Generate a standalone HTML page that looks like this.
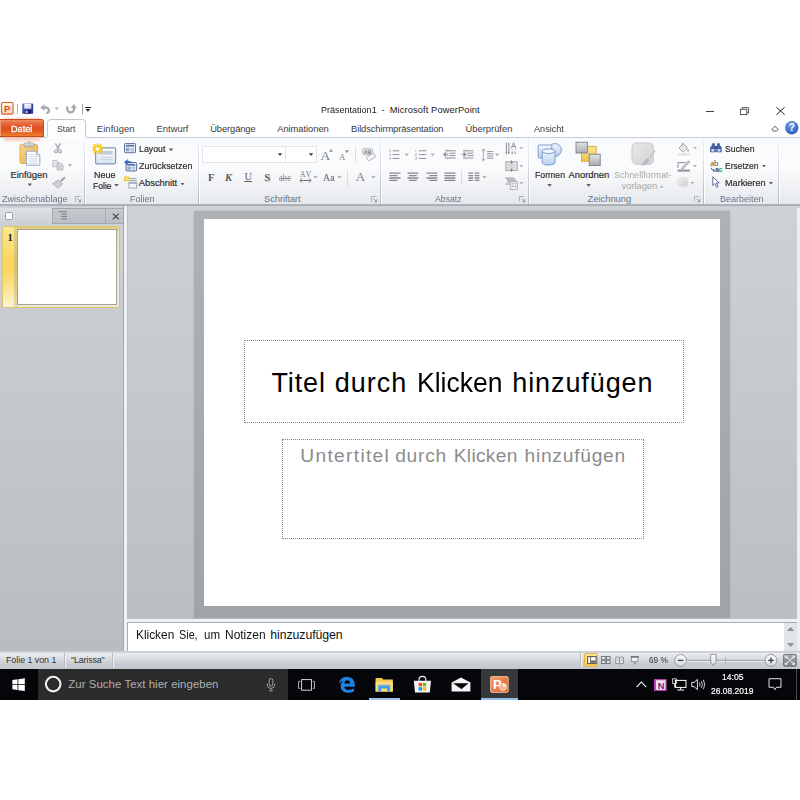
<!DOCTYPE html>
<html lang="de"><head><meta charset="utf-8"><title>Präsentation1 - Microsoft PowerPoint</title>
<style>
*{box-sizing:border-box;margin:0;padding:0}
html,body{width:800px;height:800px;background:#fff;overflow:hidden}
body{font-family:"Liberation Sans",sans-serif;font-size:9px;color:#222;position:relative}
.a{position:absolute}
.t{position:absolute;white-space:nowrap;line-height:1;font-family:"Liberation Sans",sans-serif}
svg{position:absolute;overflow:visible}
#title{left:0;top:100px;width:800px;height:20px;background:#fff}
#tabs{left:0;top:119px;width:800px;height:19px;background:#fff}
#ribbon{left:0;top:137px;width:800px;height:67px;background:linear-gradient(#f9fafb 0%,#fafbfc 45%,#f0f2f5 74%,#e4e7ec 100%);border-top:1px solid #c7cdd6}
#ribline{left:0;top:204px;width:800px;height:2px;background:linear-gradient(#b4b8be,#a7abb1)}
#work{left:0;top:206px;width:800px;height:445px;background:linear-gradient(#ced2d7,#b9bdc2)}
.gsep{position:absolute;top:139px;width:2px;height:65px;background:linear-gradient(#eef0f3 0%,#dde1e6 35%,#c3c8cf 75%,#b1b6be 100%);border-right:1px solid #fff}
.dd{position:absolute;width:4.6px;height:2.8px;background:#5c5e62;clip-path:polygon(0 0,100% 0,50% 100%);margin-left:-0.3px}
.ddg{background:#b0b3b8}
.lau{position:absolute;width:6px;height:6px}
#status{left:0;top:651px;width:800px;height:18px;background:linear-gradient(#ccd0d4 0,#cfd2d6 1.5px,#e8ebef 2.5px,#e4e7eb 4px,#d8dbdf 8px,#cbced3 12px,#c4c7cc 18px)}
#taskbar{left:0;top:669px;width:800px;height:31px;background:#050609}
</style></head><body>
<div id="title" class="a"></div>
<!-- app icon -->
<svg style="left:0.5px;top:102px" width="13" height="13" viewBox="0 0 14 14">
 <defs><linearGradient id="gpp" x1="0" y1="0" x2="0" y2="1"><stop offset="0" stop-color="#fff6ee"/><stop offset="1" stop-color="#f7cdb0"/></linearGradient></defs>
 <rect x="0.5" y="0.5" width="12.5" height="12.5" rx="1.5" fill="url(#gpp)" stroke="#d9622b" stroke-width="1.2"/>
 <text x="3.2" y="10.8" font-family="Liberation Sans,sans-serif" font-weight="bold" font-size="10.5" fill="#d9501a">P</text>
</svg>
<div class="a" style="left:16.5px;top:103.5px;width:1px;height:10.5px;background:#b0b0b0"></div>
<!-- save -->
<svg style="left:22.3px;top:103px" width="11.6" height="11.2" viewBox="0 0 13 12">
 <defs><linearGradient id="gsv" x1="0" y1="0" x2="1" y2="1"><stop offset="0" stop-color="#6a78d8"/><stop offset="0.5" stop-color="#3a45b4"/><stop offset="1" stop-color="#262c8a"/></linearGradient>
 <linearGradient id="gsw" x1="0" y1="0" x2="1" y2="1"><stop offset="0" stop-color="#ffffff"/><stop offset="1" stop-color="#c9d2ee"/></linearGradient></defs>
 <rect x="0.3" y="0.3" width="12.2" height="11.4" rx="0.8" fill="url(#gsv)"/>
 <rect x="2.6" y="0.6" width="7.8" height="5.6" fill="url(#gsw)"/>
 <rect x="3" y="7.6" width="7" height="4" fill="#1a1f66"/>
 <rect x="4" y="8.4" width="2.2" height="2.6" fill="#c9d0ec"/>
</svg>
<!-- undo -->
<svg style="left:40px;top:103.5px" width="11" height="10" viewBox="0 0 11 10">
 <path d="M3 3.6 H6 A3 3 0 0 1 9 6.6 Q9 8.6 6.4 9.2" fill="none" stroke="#a6aab0" stroke-width="2.3"/>
 <path d="M0.3 3.6 L4.6 0.2 V7 Z" fill="#a6aab0"/>
</svg>
<div class="dd ddg" style="left:54.8px;top:107.2px"></div>
<!-- redo -->
<svg style="left:65px;top:103.5px" width="12" height="10" viewBox="0 0 12 10">
 <path d="M2.2 2.4 V5 A3.4 3.4 0 0 0 9 5 V3.4" fill="none" stroke="#a6aab0" stroke-width="2.3"/>
 <path d="M5.6 3.8 L9.4 0 L11.6 4.6 Z" fill="#a6aab0"/>
</svg>
<div class="a" style="left:81.5px;top:104px;width:1px;height:10px;background:#9a9a9a"></div>
<!-- qat customize -->
<div class="a" style="left:85.4px;top:106.6px;width:5.2px;height:1px;background:#222"></div>
<div class="dd" style="left:85.6px;top:108.8px;width:5.2px;height:3px;background:#222"></div>
<!-- window controls -->
<div class="a" style="left:705.5px;top:110.7px;width:8.5px;height:0.8px;background:#444"></div>
<svg style="left:739.8px;top:106.6px" width="9.4" height="8.4" viewBox="0 0 10 9">
 <path d="M2.5 2.3 V0.6 H9.2 V6.4 H7.4" fill="none" stroke="#333" stroke-width="0.85"/>
 <rect x="0.6" y="2.4" width="6.7" height="5.8" fill="none" stroke="#333" stroke-width="0.85"/>
</svg>
<svg style="left:776px;top:106.8px" width="9" height="8" viewBox="0 0 9 8">
 <path d="M0.4 0.3 L8.6 7.7 M8.6 0.3 L0.4 7.7" stroke="#222" stroke-width="1" fill="none"/>
</svg>
<div id="tabs" class="a"></div>
<div id="ribbon" class="a"></div>
<!-- Datei glow + tab -->
<div class="a" style="left:4px;top:117.5px;width:36px;height:23px;background:#f8c4b4;filter:blur(1.3px);opacity:.8"></div>
<div class="a" style="left:0;top:119px;width:44px;height:18.4px;border-radius:0 3px 0 0;background:linear-gradient(#f08d5e 0%,#e86c3e 20%,#df4f24 48%,#e2581f 72%,#ef7e2c 100%);border:1px solid #c9481c;border-left:none;box-shadow:inset 1px 0 0 #f29a72"></div>
<!-- Start tab -->
<svg style="left:44px;top:119px" width="45" height="20" viewBox="0 0 45 20">
 <path d="M0.4 18.9 Q3.4 18.9 3.4 16 V3.6 Q3.4 0.5 6.6 0.5 H38.4 Q41.6 0.5 41.6 3.6 V16 Q41.6 18.9 44.6 18.9 V20 H0.4 Z" fill="#fdfdfe"/>
 <path d="M0.4 18.9 Q3.4 18.9 3.4 16 V3.6 Q3.4 0.5 6.6 0.5 H38.4 Q41.6 0.5 41.6 3.6 V16 Q41.6 18.9 44.6 18.9" fill="none" stroke="#b7bec9" stroke-width="0.9"/>
</svg>
<!-- minimize ribbon -->
<svg style="left:771px;top:125px" width="8" height="7" viewBox="0 0 8 7">
 <path d="M0.8 4.6 L4 1.2 L7.2 4.6 L5.6 6 H2.4 Z" fill="#fff" stroke="#444" stroke-width="0.9" stroke-linejoin="round"/>
</svg>
<!-- help -->
<svg style="left:784.6px;top:121.2px" width="13.6" height="13.6" viewBox="0 0 14 14">
 <defs><radialGradient id="ghelp" cx="0.4" cy="0.3" r="0.8"><stop offset="0" stop-color="#6fa3e8"/><stop offset="1" stop-color="#1c56b8"/></radialGradient></defs>
 <circle cx="7" cy="7" r="6.6" fill="url(#ghelp)" stroke="#2a5db5" stroke-width="0.5"/>
 <text x="7" y="10.6" text-anchor="middle" font-family="Liberation Sans,sans-serif" font-weight="bold" font-size="10.5" fill="#fff">?</text>
</svg>
<div id="ribline" class="a"></div>
<div class="gsep" style="left:84px"></div>
<div class="gsep" style="left:198px"></div>
<div class="gsep" style="left:380px"></div>
<div class="gsep" style="left:528px"></div>
<div class="gsep" style="left:703px"></div>
<div class="gsep" style="left:778px"></div>
<!-- launcher symbol -->
<svg width="0" height="0" style="left:0;top:0"><defs>
 <g id="lau"><path d="M0.5 5.5 V0.5 H5.5" fill="none" stroke="#a5abb3" stroke-width="0.9"/><path d="M2.6 2.6 L5.6 5.6 M5.8 3.2 V5.8 H3.2" fill="none" stroke="#8d939b" stroke-width="0.9"/></g>
 <linearGradient id="gclip" x1="0" y1="0" x2="1" y2="1"><stop offset="0" stop-color="#f7d58a"/><stop offset="1" stop-color="#e9b04a"/></linearGradient>
 <linearGradient id="gblue" x1="0" y1="0" x2="0" y2="1"><stop offset="0" stop-color="#f2f7fd"/><stop offset="1" stop-color="#b7cfee"/></linearGradient>
 <linearGradient id="ggray" x1="0" y1="0" x2="0" y2="1"><stop offset="0" stop-color="#e3e4e6"/><stop offset="1" stop-color="#a9abae"/></linearGradient>
 <linearGradient id="gyel" x1="0" y1="0" x2="0" y2="1"><stop offset="0" stop-color="#fbe89a"/><stop offset="1" stop-color="#eec548"/></linearGradient>
</defs></svg>
<svg style="left:75px;top:196px" width="7" height="7"><use href="#lau"/></svg>
<svg style="left:371px;top:196px" width="7" height="7"><use href="#lau"/></svg>
<svg style="left:519px;top:196px" width="7" height="7"><use href="#lau"/></svg>
<svg style="left:694px;top:196px" width="7" height="7"><use href="#lau"/></svg>
<!-- paste -->
<svg style="left:19px;top:141px" width="22" height="25" viewBox="0 0 22 25">
 <rect x="1" y="3.4" width="17.6" height="19" rx="1.4" fill="url(#gclip)" stroke="#dca53f" stroke-width="0.8"/>
 <rect x="5" y="2" width="10" height="3.8" rx="1" fill="#c3c6ca" stroke="#8f9399" stroke-width="0.6"/>
 <path d="M5.8 3 H14.2" stroke="#f2f3f4" stroke-width="0.9"/>
 <circle cx="10" cy="1.8" r="1.3" fill="#e3e5e7" stroke="#8f9399" stroke-width="0.5"/>
 <path d="M7.4 10.2 H17 L20.8 14 V24.2 H7.4 Z" fill="#fdfeff" stroke="#8fa3c0" stroke-width="0.9"/>
 <path d="M17 10.2 V14 H20.8" fill="#dfe8f5" stroke="#8fa3c0" stroke-width="0.7"/>
 <path d="M9.4 13.4 H15 M9.4 15.6 H18.6 M9.4 17.8 H18.6 M9.4 20 H18.6 M9.4 22.2 H18.6" stroke="#c8d2e1" stroke-width="0.9"/>
</svg>
<div class="dd" style="left:27.8px;top:183.4px"></div>
<!-- scissors -->
<svg style="left:54.4px;top:142.8px" width="8" height="11" viewBox="0 0 8 11">
 <path d="M1.4 0.4 L5 6.6 M6.6 0.4 L3 6.6" stroke="#a9acb1" stroke-width="1.5" fill="none"/>
 <circle cx="1.9" cy="8.4" r="1.4" fill="none" stroke="#a3a6ab" stroke-width="1.1"/>
 <circle cx="6.1" cy="8.4" r="1.4" fill="none" stroke="#a3a6ab" stroke-width="1.1"/>
</svg>
<!-- copy -->
<svg style="left:52.2px;top:159.8px" width="12.4" height="10.6" viewBox="0 0 13 12">
 <path d="M0.5 0.5 H4.8 L6.8 2.5 V7.6 H0.5 Z" fill="#e6e7e9" stroke="#a9acb1" stroke-width="0.8"/>
 <path d="M5.4 3.6 H9.8 L12 5.8 V11.2 H5.4 Z" fill="#dcdde0" stroke="#a1a4a9" stroke-width="0.8"/>
 <path d="M6.8 7.2 H10.6 M6.8 9 H10.6" stroke="#b7babf" stroke-width="0.7"/>
</svg>
<div class="dd ddg" style="left:68px;top:164px"></div>
<!-- format painter -->
<svg style="left:52px;top:176.5px" width="14" height="12" viewBox="0 0 14 12">
 <path d="M9.2 3.6 L12.4 0.8" stroke="#a6a9ad" stroke-width="2.2" stroke-linecap="round"/>
 <path d="M6.2 3 L10.6 6.8 L6.4 11.2 Q3 9.4 0.6 6.6 Z" fill="#cfd0d3" stroke="#a6a9ad" stroke-width="0.8"/>
</svg>
<!-- new slide -->
<svg style="left:91px;top:142px" width="26" height="23" viewBox="0 0 26 23">
 <defs><linearGradient id="gns" x1="0" y1="0" x2="0" y2="1"><stop offset="0" stop-color="#ffffff"/><stop offset="1" stop-color="#d9e4f4"/></linearGradient></defs>
 <rect x="4.6" y="5.8" width="20" height="16" rx="1.2" fill="url(#gns)" stroke="#8496b0" stroke-width="1.2"/>
 <rect x="7.6" y="8.8" width="14" height="3.8" fill="#c3cbda"/>
 <path d="M9.6 15.4 H21.6 M9.6 17.6 H21.6 M7.6 15.4 H8.4 M7.6 17.6 H8.4" stroke="#cbd3e1" stroke-width="1"/>
 <path d="M6.6 1.4 L7.6 4.2 L10.2 2.2 L9.4 5 L12 5.4 L9.8 6.8 L12 8.4 L9.4 8.6 L10.2 11.4 L7.6 9.6 L6.6 12 L5.6 9.6 L3 11.4 L3.8 8.6 L1.4 8.4 L3.4 6.8 L1.4 5.4 L3.8 5 L3 2.2 L5.6 4.2 Z" fill="#f6d02a" stroke="#f2c31a" stroke-width="0.8" stroke-linejoin="round"/>
 <circle cx="6.6" cy="6.8" r="1.9" fill="#fffbe0"/>
</svg>
<div class="dd" style="left:114.5px;top:184px"></div>
<!-- layout -->
<svg style="left:124px;top:143px" width="12.6" height="10.8" viewBox="0 0 14 12">
 <rect x="0.6" y="0.6" width="12.2" height="10.2" rx="0.8" fill="#f4f7fc" stroke="#4a6494" stroke-width="1"/>
 <rect x="2" y="2" width="9.4" height="2" fill="#5a75a8"/>
 <rect x="2" y="5.2" width="4" height="4.2" fill="#8ea3c8"/>
 <path d="M7.2 5.8 H11.4 M7.2 7.4 H11.4 M7.2 9 H11.4" stroke="#7d93bc" stroke-width="0.8"/>
</svg>
<div class="dd" style="left:169px;top:148.4px"></div>
<!-- reset -->
<svg style="left:123.8px;top:158.8px" width="13.4" height="12.6" viewBox="0 0 14 13">
 <rect x="2.2" y="3.6" width="11" height="8.8" rx="0.8" fill="#eef2f9" stroke="#4a6494" stroke-width="1"/>
 <rect x="3.6" y="5.2" width="8.2" height="1.8" fill="#5a75a8"/>
 <rect x="3.6" y="8" width="3.4" height="3" fill="#8ea3c8"/>
 <path d="M8 8.6 H11.8 M8 10.4 H11.8" stroke="#7d93bc" stroke-width="0.8"/>
 <path d="M0.4 3.4 L3.6 0.4 V2 Q7 1.6 8.4 4.4 Q6.4 3.4 3.6 4.2 V6 Z" fill="#2f6fd6" stroke="#1e4fa8" stroke-width="0.4"/>
</svg>
<!-- section -->
<svg style="left:123.6px;top:175.8px" width="13.6" height="12.6" viewBox="0 0 14 13">
 <rect x="0.4" y="1" width="4.6" height="3.8" fill="#fbe27a" stroke="#e8b920" stroke-width="0.8"/>
 <path d="M5.6 2.6 H13 M5.6 4.6 H13" stroke="#9aa3b3" stroke-width="1"/>
 <rect x="5" y="6.4" width="8.2" height="6" fill="#f4f6fb" stroke="#8f99ad" stroke-width="0.9"/>
 <rect x="5" y="6.4" width="8.2" height="1.8" fill="#a8b2c6"/>
</svg>
<div class="dd" style="left:180.4px;top:182.6px"></div>
<!-- font combos -->
<div class="a" style="left:202px;top:146px;width:84px;height:17px;background:#fff;border:1px solid #e2e5ea"></div>
<div class="a" style="left:285px;top:146px;width:32px;height:17px;background:#fff;border:1px solid #e2e5ea"></div>
<div class="dd" style="left:278px;top:153.2px;background:#444"></div>
<div class="dd" style="left:309px;top:153.2px;background:#444"></div>
<!-- grow/shrink markers -->
<svg style="left:328.6px;top:148.6px" width="4" height="3" viewBox="0 0 4 3"><path d="M0 2.8 L2 0 L4 2.8 Z" fill="#8a8d91"/></svg>
<svg style="left:344.8px;top:150px" width="4" height="3" viewBox="0 0 4 3"><path d="M0 0.2 L2 3 L4 0.2 Z" fill="#8a8d91"/></svg>
<div class="a" style="left:355px;top:148px;width:1px;height:15px;background:#d9dce1"></div>
<!-- clear formatting -->
<svg style="left:362px;top:148px" width="14" height="13" viewBox="0 0 14 13">
 <rect x="0.5" y="0.5" width="10.2" height="6.4" rx="1.5" fill="#e2e2e5" stroke="#b4b6ba" stroke-width="0.8"/>
 <text x="5.6" y="5.6" text-anchor="middle" font-family="Liberation Sans,sans-serif" font-weight="bold" font-size="5.2" fill="#7d7f84">AB</text>
 <rect x="4.6" y="6.8" width="8.6" height="4.6" rx="1.6" transform="rotate(-30 8.9 9.1)" fill="#f6f6f7" stroke="#a4a6ab" stroke-width="0.8"/>
</svg>
<!-- AV spacing arrow -->
<svg style="left:298.5px;top:178.2px" width="13" height="5" viewBox="0 0 13 5">
 <path d="M1 2.5 H12 M3.2 0.4 L0.8 2.5 L3.2 4.6 M9.8 0.4 L12.2 2.5 L9.8 4.6" fill="none" stroke="#77797d" stroke-width="1"/>
</svg>
<div class="dd ddg" style="left:313.4px;top:176px"></div>
<div class="dd ddg" style="left:337.4px;top:176px"></div>
<div class="a" style="left:347px;top:170px;width:1px;height:16px;background:#d9dce1"></div>
<div class="dd ddg" style="left:371.4px;top:176px"></div>
<!-- bullets -->
<svg style="left:389px;top:148.5px" width="11" height="11" viewBox="0 0 11 11">
 <g fill="#a9acb1"><circle cx="1.2" cy="1.8" r="0.9"/><circle cx="1.2" cy="5.6" r="0.9"/><circle cx="1.2" cy="9.4" r="0.9"/></g>
 <path d="M3.6 1.8 H10.4 M3.6 5.6 H10.4 M3.6 9.4 H10.4" stroke="#8f9297" stroke-width="1"/>
</svg>
<div class="dd ddg" style="left:404.6px;top:153.4px"></div>
<!-- numbering -->
<svg style="left:415px;top:148.5px" width="12" height="11" viewBox="0 0 12 11">
 <path d="M0.8 0.6 V3 M0.3 4.6 H1.5 V5.6 H0.3 V6.6 H1.5 M0.3 8.2 H1.5 V10.4 H0.3 M0.6 9.3 H1.5" stroke="#a0a3a8" stroke-width="0.6" fill="none"/>
 <path d="M3.8 1.8 H11.2 M3.8 5.6 H11.2 M3.8 9.4 H11.2" stroke="#8f9297" stroke-width="1"/>
</svg>
<div class="dd ddg" style="left:430.6px;top:153.4px"></div>
<!-- decrease indent -->
<svg style="left:443px;top:147.5px" width="14" height="13" viewBox="0 0 14 13">
 <path d="M4.6 0.6 V12.4" stroke="#b4b7bc" stroke-width="0.7" stroke-dasharray="1 1"/>
 <path d="M2 2.8 H12.6 M6.4 5.2 H12.6 M6.4 7.6 H12.6 M2 10 H12.6" stroke="#8f9297" stroke-width="1"/>
 <path d="M0.2 6.4 L2.8 4.4 V8.4 Z M2.6 6.4 H5.6" fill="#8f9297" stroke="#8f9297" stroke-width="0.8"/>
</svg>
<!-- increase indent -->
<svg style="left:461px;top:147.5px" width="14" height="13" viewBox="0 0 14 13">
 <path d="M4.6 0.6 V12.4" stroke="#b4b7bc" stroke-width="0.7" stroke-dasharray="1 1"/>
 <path d="M2 2.8 H12.6 M6.4 5.2 H12.6 M6.4 7.6 H12.6 M2 10 H12.6" stroke="#8f9297" stroke-width="1"/>
 <path d="M5.4 6.4 L2.8 4.4 V8.4 Z M0.2 6.4 H3" fill="#8f9297" stroke="#8f9297" stroke-width="0.8"/>
</svg>
<!-- line spacing -->
<svg style="left:481px;top:147.5px" width="13" height="14" viewBox="0 0 13 14">
 <path d="M2.4 1 V12.6 M0.6 3.2 L2.4 0.8 L4.2 3.2 M0.6 10.6 L2.4 13 L4.2 10.6" stroke="#a0a3a8" stroke-width="0.9" fill="none"/>
 <path d="M6 3.6 H12.4 M6 5.8 H12.4 M6 8 H12.4 M6 10.2 H12.4" stroke="#8f9297" stroke-width="1"/>
</svg>
<div class="dd ddg" style="left:495px;top:153.4px"></div>
<!-- align icons -->
<svg style="left:389px;top:171.5px" width="12" height="10" viewBox="0 0 12 10">
 <path d="M0.4 1.2 H11.4 M0.4 3.6 H8.4 M0.4 6 H11.4 M0.4 8.4 H8.4" stroke="#85888d" stroke-width="1.3"/>
</svg>
<svg style="left:407px;top:171.5px" width="12" height="10" viewBox="0 0 12 10">
 <path d="M0.4 1.2 H11.4 M2 3.6 H9.8 M0.4 6 H11.4 M2 8.4 H9.8" stroke="#85888d" stroke-width="1.3"/>
</svg>
<svg style="left:426px;top:171.5px" width="12" height="10" viewBox="0 0 12 10">
 <path d="M0.4 1.2 H11.4 M3.4 3.6 H11.4 M0.4 6 H11.4 M3.4 8.4 H11.4" stroke="#85888d" stroke-width="1.3"/>
</svg>
<svg style="left:444px;top:171.5px" width="12" height="10" viewBox="0 0 12 10">
 <path d="M0.4 1.2 H11.4 M0.4 3.6 H11.4 M0.4 6 H11.4 M0.4 8.4 H11.4" stroke="#85888d" stroke-width="1.3"/>
</svg>
<div class="a" style="left:461px;top:170px;width:1px;height:15px;background:#d9dce1"></div>
<svg style="left:468px;top:171.5px" width="12" height="10" viewBox="0 0 12 10">
 <path d="M0.4 1.2 H5 M6.6 1.2 H11.4 M0.4 3.6 H5 M6.6 3.6 H11.4 M0.4 6 H5 M6.6 6 H11.4 M0.4 8.4 H5 M6.6 8.4 H11.4" stroke="#85888d" stroke-width="1.3"/>
</svg>
<div class="dd ddg" style="left:482.4px;top:176px"></div>
<!-- text direction -->
<svg style="left:504.5px;top:141.5px" width="13" height="13" viewBox="0 0 13 13">
 <path d="M1.4 0.6 V11.6 M3.8 0.6 V11.6" stroke="#85888d" stroke-width="1"/>
 <path d="M6.2 6.4 L8.6 0.8 L11 6.4 M7 4.6 H10.2" stroke="#85888d" stroke-width="0.9" fill="none"/>
 <path d="M7.2 7 V11.6 M10.2 7 V11.6" stroke="#9b9ea3" stroke-width="0.7" stroke-dasharray="1 0.8"/>
 <path d="M0.4 10.4 L1.4 12.2 L2.4 10.4 M2.8 10.4 L3.8 12.2 L4.8 10.4 M6.2 10.4 L7.2 12.2 L8.2 10.4 M9.2 10.4 L10.2 12.2 L11.2 10.4" fill="#85888d"/>
</svg>
<div class="dd ddg" style="left:519.4px;top:146.6px"></div>
<!-- align text -->
<svg style="left:504.5px;top:159.5px" width="13" height="12" viewBox="0 0 13 12">
 <rect x="0.8" y="1.8" width="11.4" height="8.6" fill="#e4e5e7" stroke="#9b9ea3" stroke-width="0.9"/>
 <path d="M2.4 4.6 H10.6 M2.4 6.2 H10.6 M2.4 7.8 H10.6" stroke="#b3b5b9" stroke-width="0.7" stroke-dasharray="1 0.6"/>
 <path d="M6.5 0.2 V3.4 M5.2 2 L6.5 3.6 L7.8 2 M6.5 12 V8.8 M5.2 10.2 L6.5 8.6 L7.8 10.2" stroke="#7d8085" stroke-width="0.8" fill="none"/>
</svg>
<div class="dd ddg" style="left:519.4px;top:164.6px"></div>
<!-- smartart -->
<svg style="left:504.5px;top:176.5px" width="13" height="13" viewBox="0 0 13 13">
 <path d="M0.6 0.8 H8.6 L11 4 H3 Z" fill="#bfc1c4" stroke="#9b9ea3" stroke-width="0.6"/>
 <path d="M0.6 7.4 L3 4 H6 V7.4 Z" fill="#cfd0d3" stroke="#a9abb0" stroke-width="0.5"/>
 <rect x="5.2" y="4.6" width="7.2" height="7.8" fill="#ececee" stroke="#a9abb0" stroke-width="0.8"/>
 <path d="M6.8 6.8 H8.4 M9.6 6.8 H11.2 M6.8 9.4 H8.4 M9.6 9.4 H11.2" stroke="#a9abb0" stroke-width="1.1"/>
</svg>
<div class="dd ddg" style="left:519.4px;top:181.8px"></div>
<!-- Formen -->
<svg style="left:537px;top:142px" width="25" height="24" viewBox="0 0 25 24">
 <circle cx="18" cy="8" r="6.4" fill="url(#gblue)" stroke="#6f93c8" stroke-width="0.9"/>
 <rect x="1.2" y="3" width="13.6" height="13" rx="0.8" fill="url(#gblue)" stroke="#6f93c8" stroke-width="0.9"/>
 <path d="M5.2 9.2 V20.6 A6.4 2.4 0 0 0 18 20.6 V9.2" fill="url(#gblue)" stroke="#6f93c8" stroke-width="0.9"/>
 <ellipse cx="11.6" cy="9.2" rx="6.4" ry="2.3" fill="#f4f8fe" stroke="#6f93c8" stroke-width="0.9"/>
</svg>
<div class="dd" style="left:547.6px;top:184px"></div>
<!-- Anordnen -->
<svg style="left:575px;top:141px" width="27" height="26" viewBox="0 0 27 26">
 <rect x="6.4" y="5.4" width="14.8" height="14.8" fill="url(#gyel)" stroke="#d8ab2c" stroke-width="0.9"/>
 <rect x="1" y="1.2" width="11.4" height="10.8" fill="url(#ggray)" stroke="#7d8085" stroke-width="0.9"/>
 <rect x="14.2" y="13.2" width="11" height="11.4" fill="url(#ggray)" stroke="#7d8085" stroke-width="0.9"/>
</svg>
<div class="dd" style="left:586.6px;top:184px"></div>
<!-- Schnellformat -->
<svg style="left:631px;top:142px" width="26" height="25" viewBox="0 0 26 25">
 <defs><linearGradient id="gq" x1="0" y1="0" x2="1" y2="1"><stop offset="0" stop-color="#e8e8ea"/><stop offset="1" stop-color="#d3d3d6"/></linearGradient></defs>
 <rect x="1" y="1" width="21.4" height="21.4" rx="4.4" fill="url(#gq)" stroke="#c4c5c8" stroke-width="0.9"/>
 <path d="M23.6 9 L16 18.6" stroke="#c9cacd" stroke-width="1.8" stroke-linecap="round"/>
 <path d="M16.6 16.6 Q12.6 18.4 10 23.4 Q15.4 23.6 18.2 18.4 Z" fill="#b9babd"/>
</svg>
<div class="dd ddg" style="left:659.6px;top:185.6px"></div>
<!-- fill -->
<svg style="left:676.5px;top:141.5px" width="14" height="14" viewBox="0 0 14 14">
 <path d="M2 6 L6.4 1.6 L10.6 5.8 L6.2 10.2 Z" fill="#e6e7e9" stroke="#9b9ea3" stroke-width="0.9"/>
 <path d="M5.4 0.6 V4.4" stroke="#9b9ea3" stroke-width="0.9"/>
 <path d="M10.8 6.2 Q12.6 8.4 11.8 9.6 Q10.8 10.2 10.2 9.2 Q10 7.8 10.8 6.2 Z" fill="#a9abb0"/>
 <rect x="0.6" y="11.4" width="12" height="2" fill="#dfe0e2"/>
</svg>
<div class="dd ddg" style="left:693px;top:146.6px"></div>
<!-- outline -->
<svg style="left:676.5px;top:159.5px" width="14" height="12" viewBox="0 0 14 12">
 <path d="M1 8 V2.6 H8.6" fill="none" stroke="#7d8085" stroke-width="0.9"/>
 <path d="M5 7.4 L11.6 0.8 L12.8 2 L6.4 8.4 L4.6 8.8 Z" fill="#d5d6d9" stroke="#8f9297" stroke-width="0.8"/>
 <rect x="0.6" y="9.6" width="12.2" height="2" fill="#8f9297"/>
</svg>
<div class="dd ddg" style="left:693px;top:164.6px"></div>
<!-- effects -->
<svg style="left:676.5px;top:176.5px" width="13" height="12" viewBox="0 0 13 12">
 <defs><linearGradient id="gef" x1="0" y1="0" x2="1" y2="1"><stop offset="0" stop-color="#f0f0f2"/><stop offset="1" stop-color="#cfd0d3"/></linearGradient></defs>
 <ellipse cx="6.8" cy="8.8" rx="5.4" ry="2.2" fill="#e3e4e6"/>
 <rect x="0.8" y="0.8" width="10" height="8" rx="2.6" fill="url(#gef)" stroke="#d0d1d4" stroke-width="0.5" transform="rotate(-6 6 5)"/>
</svg>
<div class="dd ddg" style="left:690.4px;top:181.8px"></div>
<!-- binoculars -->
<svg style="left:710px;top:142.8px" width="12.2" height="9.8" viewBox="0 0 14 11">
 <path d="M2.6 0.6 H5.2 V3 L6.2 4 V10.2 H0.6 V4.6 L2.6 3 Z" fill="#3f5fa8" stroke="#2a3f7a" stroke-width="0.6"/>
 <path d="M8.4 0.6 H11 V3 L13 4.6 V10.2 H7.4 V4 L8.4 3 Z" fill="#3f5fa8" stroke="#2a3f7a" stroke-width="0.6"/>
 <rect x="5.8" y="3.6" width="2" height="2.6" fill="#2a3f7a"/>
 <rect x="1.6" y="6.8" width="3.4" height="3" fill="#c9d6f2"/><rect x="8.6" y="6.8" width="3.4" height="3" fill="#c9d6f2"/>
</svg>
<!-- replace -->
<svg style="left:709.5px;top:159.5px" width="15" height="13" viewBox="0 0 15 13">
 <text x="0.2" y="6" font-family="Liberation Serif,serif" font-size="8.6" fill="#4a4a4a">ab</text>
 <text x="5.2" y="12.2" font-family="Liberation Sans,sans-serif" font-weight="bold" font-size="6.6" fill="#444">a<tspan fill="#2f9a3a">c</tspan></text>
 <path d="M1.2 7.6 Q1.4 10.6 4.4 10.6 M3.2 9 L4.6 10.6 L3.2 12" stroke="#3a66c0" stroke-width="1" fill="none"/>
</svg>
<div class="dd" style="left:762px;top:164.6px"></div>
<!-- select cursor -->
<svg style="left:711.8px;top:175.8px" width="8.6" height="12.4" viewBox="0 0 9 13">
 <path d="M0.8 0.8 V10 L3 7.8 L4.8 11.8 L6.4 11 L4.6 7.2 H7.6 Z" fill="#fdfdff" stroke="#4a5a8a" stroke-width="0.9" stroke-linejoin="round"/>
</svg>
<div class="dd" style="left:769px;top:181.8px"></div>
<div id="work" class="a"></div>
<!-- left panel -->
<div class="a" style="left:0;top:208px;width:52.5px;height:17px;background:linear-gradient(#dfe2e6,#d3d6da 60%,#cbced3)"></div>
<div class="a" style="left:52px;top:208px;width:71px;height:15.5px;background:linear-gradient(#c6cacf,#bbbfc5);border:1px solid #a4a9b0;border-right:none"></div>
<div class="a" style="left:105px;top:208px;width:1px;height:15px;background:#a4a9b0"></div>
<!-- slides tab icon -->
<div class="a" style="left:4.8px;top:211.5px;width:8px;height:8px;border-radius:1.6px;background:#fbfbfc;border:0.8px solid #9ea3aa"></div>
<!-- outline tab icon -->
<svg style="left:57.6px;top:211px" width="10" height="9" viewBox="0 0 10 9">
 <path d="M0.2 0.7 H9 M3.2 3.1 H9 M3.2 5.5 H9 M3.2 7.9 H9" stroke="#777c83" stroke-width="0.95"/>
</svg>

<!-- close x -->
<svg style="left:112px;top:212.8px" width="8" height="7" viewBox="0 0 8 7">
 <path d="M0.8 0.6 L6.8 6.2 M6.8 0.6 L0.8 6.2" stroke="#4a4d52" stroke-width="1.25"/>
</svg>
<!-- thumbnail selection -->
<div class="a" style="left:2px;top:226px;width:118px;height:81.5px;border-radius:2.5px;border:1px solid #dfc462;background:linear-gradient(#dfcd88 0,#dfcd88 2.5px,#e8e2c6 5px,#eceadc 100%)"></div>
<div class="a" style="left:3px;top:227px;width:11px;height:79.5px;border-radius:1.5px 0 0 1.5px;background:linear-gradient(#fbe690 0%,#fad868 38%,#fad660 55%,#fbe08a 72%,#fdf4d6 100%)"></div>
<div class="a" style="left:14px;top:227px;width:4px;height:79.5px;background:linear-gradient(#e0cf8c 0%,#d9bf66 45%,#dcc77c 70%,#e6dcae 100%)"></div>
<div class="a" style="left:17px;top:229px;width:100px;height:76px;background:#fff;border:1px solid #a6a496"></div>
<!-- splitter -->
<div class="a" style="left:123px;top:206px;width:1px;height:445px;background:#a3a7ad"></div>
<div class="a" style="left:124px;top:206px;width:3px;height:445px;background:#f0f1f3"></div>
<div class="a" style="left:127px;top:206px;width:1px;height:413px;background:#bcc0c5"></div>
<!-- slide frame + slide -->
<div class="a" style="left:194px;top:211px;width:536px;height:407px;background:linear-gradient(#aeb1b6,#a0a3a8);box-shadow:0 0 1.5px #adb0b5"></div>
<div class="a" style="left:204px;top:219px;width:516px;height:387px;background:#fff"></div>
<!-- placeholders -->
<div class="a" style="left:243.5px;top:339.5px;width:440px;height:83.5px;border:1px dotted #858585"></div>
<div class="a" style="left:282px;top:439px;width:362px;height:99.5px;border:1px dotted #858585"></div>
<!-- notes -->
<div class="a" style="left:124px;top:618.5px;width:673px;height:3.5px;background:#f1f2f4"></div>
<div class="a" style="left:127px;top:621.5px;width:673px;height:29.5px;background:#fff;border-top:1px solid #a9adb3;border-left:1px solid #a9adb3"></div>
<div class="a" style="left:784px;top:623px;width:13px;height:28px;background:#e1e4e9"></div>
<div class="a" style="left:797px;top:208px;width:3px;height:443px;background:#eceef1"></div>
<svg style="left:786.8px;top:627.4px" width="7.2" height="4" viewBox="0 0 7.2 4"><path d="M0 4 L3.6 0 L7.2 4 Z" fill="#86948f"/></svg>
<svg style="left:786.8px;top:643px" width="7.2" height="4" viewBox="0 0 7.2 4"><path d="M0 0 L3.6 4 L7.2 0 Z" fill="#86948f"/></svg>
<div id="status" class="a"></div>
<div class="a" style="left:64px;top:653px;width:2px;height:14px;background:linear-gradient(90deg,#b4b8be 0 1px,#f2f3f5 1px 2px)"></div>
<div class="a" style="left:112px;top:653px;width:2px;height:14px;background:linear-gradient(90deg,#b4b8be 0 1px,#f2f3f5 1px 2px)"></div>
<div class="a" style="left:580px;top:653px;width:2px;height:14px;background:linear-gradient(90deg,#b4b8be 0 1px,#f2f3f5 1px 2px)"></div>
<!-- normal view (active) -->
<div class="a" style="left:583.8px;top:653.2px;width:14.4px;height:14.3px;border-radius:2px;background:linear-gradient(#fce59a,#f8d05c);border:1px solid #e3b443"></div>
<svg style="left:587px;top:656px" width="10" height="8.4" viewBox="0 0 10 8.4">
 <rect x="0.6" y="0.6" width="8.6" height="7" fill="#fff" stroke="#5f5c52" stroke-width="1.1"/>
 <path d="M3.6 0.6 V7.6" stroke="#5f5c52" stroke-width="0.9"/>
 <rect x="4" y="4.4" width="4.8" height="2.8" fill="#77746a"/>
</svg>
<!-- sorter -->
<svg style="left:601px;top:656px" width="10" height="8.4" viewBox="0 0 10 8.4">
 <g fill="#fbfbfc" stroke="#5f6369" stroke-width="0.9"><rect x="0.5" y="0.6" width="3.7" height="2.7"/><rect x="5.4" y="0.6" width="3.7" height="2.7"/><rect x="0.5" y="4.8" width="3.7" height="2.7"/><rect x="5.4" y="4.8" width="3.7" height="2.7"/></g>
</svg>
<!-- reading -->
<svg style="left:615.4px;top:655.6px" width="9.4" height="9" viewBox="0 0 10 10">
 <path d="M0.6 1.4 Q2.8 0.4 4.8 1.8 Q6.8 0.4 9.2 1.4 V8.6 Q6.8 7.6 4.8 9 Q2.8 7.6 0.6 8.6 Z M4.8 1.8 V9" fill="#e4e6e9" stroke="#7e828a" stroke-width="0.9"/>
 <path d="M1.8 3.4 H3.8 M1.8 5.2 H3.8 M5.8 3.4 H8 M5.8 5.2 H8" stroke="#a5a9af" stroke-width="0.6"/>
</svg>
<!-- slideshow -->
<svg style="left:630px;top:655.8px" width="9.4" height="9" viewBox="0 0 10 10">
 <path d="M0.4 1 H9.6" stroke="#55595f" stroke-width="1.5"/>
 <rect x="1.4" y="1.6" width="7.2" height="4.4" fill="#f1f2f4" stroke="#7c8087" stroke-width="0.8"/>
 <path d="M5 6 V8.2 M2.8 9.4 L5 7.8 L7.2 9.4" stroke="#7c8087" stroke-width="0.8" fill="none"/>
</svg>
<!-- zoom -->
<svg style="left:674px;top:653px" width="124" height="15" viewBox="0 0 124 15">
 <defs><linearGradient id="gz" x1="0" y1="0" x2="0" y2="1"><stop offset="0" stop-color="#ffffff"/><stop offset="1" stop-color="#d5d8dc"/></linearGradient></defs>
 <path d="M12 7.4 H92" stroke="#8f949b" stroke-width="1"/>
 <path d="M12 8.3 H92" stroke="#f5f6f7" stroke-width="0.8"/>
 <path d="M51.5 4.4 V10.4" stroke="#9fa4ab" stroke-width="0.8"/>
 <circle cx="6.6" cy="7.4" r="5.9" fill="url(#gz)" stroke="#8b9097" stroke-width="0.9"/>
 <path d="M3.8 7.4 H9.4" stroke="#3c3f44" stroke-width="1.3"/>
 <circle cx="97" cy="7.4" r="5.9" fill="url(#gz)" stroke="#8b9097" stroke-width="0.9"/>
 <path d="M94.2 7.4 H99.8 M97 4.6 V10.2" stroke="#3c3f44" stroke-width="1.3"/>
 <path d="M36.6 1.4 H42 V9.2 L39.3 12.4 L36.6 9.2 Z" fill="url(#gz)" stroke="#7c8087" stroke-width="0.8"/>
 <defs><linearGradient id="gfit" x1="0" y1="0" x2="0" y2="1"><stop offset="0" stop-color="#a4a7ab"/><stop offset="1" stop-color="#7e8185"/></linearGradient></defs>
 <rect x="109.6" y="1.4" width="12.6" height="11.8" rx="1" fill="url(#gfit)" stroke="#66696e" stroke-width="0.9"/>
 <path d="M111.6 3.4 L114.6 6 M120.2 3.4 L117.2 6 M111.6 11.2 L114.6 8.6 M120.2 11.2 L117.2 8.6" stroke="#f4f5f6" stroke-width="1.1"/>
 <path d="M111.2 3 H113.4 M111.2 3 V5 M120.6 3 H118.4 M120.6 3 V5 M111.2 11.6 H113.4 M111.2 11.6 V9.6 M120.6 11.6 H118.4 M120.6 11.6 V9.6" stroke="#f4f5f6" stroke-width="0.9"/>
 <rect x="115" y="6.4" width="1.8" height="1.8" fill="#e9eaec"/>
</svg>
<div id="taskbar" class="a"></div>
<div class="a" style="left:37.5px;top:669px;width:250px;height:31px;background:#2b2b2c"></div>
<!-- windows logo -->
<svg style="left:11.8px;top:677.8px" width="13.4" height="13.4" viewBox="0 0 14 14">
 <path d="M0.4 2.2 L5.8 1.4 V6.6 H0.4 Z M6.6 1.3 L13.4 0.3 V6.6 H6.6 Z M0.4 7.4 H5.8 V12.6 L0.4 11.8 Z M6.6 7.4 H13.4 V13.7 L6.6 12.7 Z" fill="#fff"/>
</svg>
<!-- cortana circle -->
<svg style="left:44px;top:675.4px" width="18.4" height="18.4" viewBox="0 0 18.4 18.4"><circle cx="9.2" cy="9.1" r="7.3" fill="none" stroke="#f0f0f0" stroke-width="2.1"/></svg>
<!-- mic -->
<svg style="left:266px;top:678px" width="10" height="14" viewBox="0 0 10 14">
 <rect x="3.2" y="0.6" width="3.6" height="7.4" rx="1.8" fill="none" stroke="#b4b4b4" stroke-width="0.85"/>
 <path d="M1.2 5.6 V6.6 A3.8 3.8 0 0 0 8.8 6.6 V5.6 M5 10.4 V12.8 M3 12.9 H7" fill="none" stroke="#b4b4b4" stroke-width="0.85"/>
</svg>
<!-- task view -->
<svg style="left:297.5px;top:678.5px" width="17" height="12" viewBox="0 0 17 12">
 <rect x="3.6" y="0.6" width="9.8" height="10.6" fill="none" stroke="#e8e8e8" stroke-width="0.9"/>
 <path d="M2.2 2.4 H0.6 V9.4 H2.2 M14.8 2.4 H16.4 V9.4 H14.8" fill="none" stroke="#e0e0e0" stroke-width="0.8"/>
</svg>
<!-- edge -->
<svg style="left:338px;top:675.5px" width="18" height="17" viewBox="0 0 18 17">
 <path d="M0.8 8 Q1.6 1 9 0.8 Q16.6 1.2 16.8 9.4 V10.8 H6.2 Q6.6 13.8 10.4 14 Q13.4 14 16 12.6 V15.6 Q13 17 9.6 16.8 Q3 16.4 2.6 10 Q2.6 6.6 5.8 4.6 Q3 5 0.8 8 Z M6.2 7.6 H12.2 Q12 4.2 9.2 4.2 Q6.6 4.4 6.2 7.6 Z" fill="#1e82e0" fill-rule="evenodd"/>
</svg>
<!-- explorer -->
<svg style="left:375px;top:676.5px" width="19" height="16" viewBox="0 0 19 16">
 <path d="M0.6 1 H6.8 L8.2 2.6 H17.8 V14.6 H0.6 Z" fill="#f7c64a"/>
 <path d="M0.6 4.4 H17.8 V14.6 H0.6 Z" fill="#fbdc78"/>
 <path d="M3.2 14.6 V8.6 H15.2 V14.6 H12.2 V11.4 H6.2 V14.6 Z" fill="#3c9be0"/>
 <rect x="3.2" y="7.8" width="12" height="1.6" fill="#63b4ee"/>
</svg>
<div class="a" style="left:369px;top:698px;width:31px;height:2px;background:#9cc4ea"></div>
<!-- store -->
<svg style="left:412.5px;top:675.5px" width="19" height="17" viewBox="0 0 19 17">
 <path d="M6 5 V3.6 A3.4 3.2 0 0 1 12.8 3.6 V5" fill="none" stroke="#f2f2f2" stroke-width="1.1"/>
 <path d="M0.8 4.8 H18 L16.8 16.4 H2 Z" fill="#f4f4f4"/>
 <rect x="5.6" y="7" width="3.4" height="3.4" fill="#f25022"/><rect x="9.8" y="7" width="3.4" height="3.4" fill="#7fba00"/>
 <rect x="5.6" y="11.2" width="3.4" height="3.4" fill="#00a4ef"/><rect x="9.8" y="11.2" width="3.4" height="3.4" fill="#ffb900"/>
</svg>
<!-- mail -->
<svg style="left:451px;top:676.5px" width="20" height="15" viewBox="0 0 20 15">
 <path d="M0.6 5.4 L10 0.4 L19.4 5.4 V14.4 H0.6 Z" fill="#f4f4f4"/>
 <path d="M2.4 6.2 L17.6 6.2 L10.6 12 Z" fill="#050609"/>
 <path d="M2.4 6.2 L10.6 12" stroke="#050609" stroke-width="0.4"/>
</svg>
<!-- powerpoint task button -->
<div class="a" style="left:480.5px;top:669px;width:37.5px;height:31px;background:#37383a"></div>
<div class="a" style="left:480.5px;top:698px;width:37.5px;height:2px;background:#8fbfea"></div>
<svg style="left:489.5px;top:675.5px" width="19" height="17" viewBox="0 0 19 17">
 <defs><linearGradient id="gpt" x1="0" y1="0" x2="1" y2="1"><stop offset="0" stop-color="#f6a071"/><stop offset="1" stop-color="#e0582a"/></linearGradient></defs>
 <rect x="0.6" y="0.6" width="17.6" height="15.8" rx="1.4" fill="url(#gpt)" stroke="#f7c3a4" stroke-width="0.9"/>
 <text x="3" y="13" font-family="Liberation Sans,sans-serif" font-weight="bold" font-size="13" fill="#fff">P</text>
 <circle cx="13" cy="11" r="3.6" fill="#f3b08c" stroke="#fbe3d4" stroke-width="0.8"/>
 <path d="M13 11 L13 7.4 A3.6 3.6 0 0 1 16.4 10 Z" fill="#fdf0e8"/>
</svg>
<!-- tray -->
<svg style="left:636px;top:680.5px" width="11" height="7" viewBox="0 0 11 7">
 <path d="M0.6 6.2 L5.4 1 L10.2 6.2" fill="none" stroke="#fff" stroke-width="1.1"/>
</svg>
<svg style="left:654px;top:678.6px" width="12.6" height="12" viewBox="0 0 14 13">
 <rect x="0.6" y="0.6" width="12.8" height="11.8" fill="#f4e3f3" stroke="#c23fba" stroke-width="1.2"/>
 <rect x="0" y="0" width="2.2" height="13" fill="#c23fba"/>
 <text x="7.8" y="10.8" text-anchor="middle" font-family="Liberation Sans,sans-serif" font-weight="bold" font-size="10.4" fill="#7a1d7c">N</text>
</svg>
<svg style="left:672px;top:678px" width="15" height="13" viewBox="0 0 15 13">
 <rect x="3.4" y="2.4" width="10.6" height="7" fill="none" stroke="#fff" stroke-width="1"/>
 <path d="M8.6 9.4 V11.6 M5.4 12 H12" stroke="#fff" stroke-width="1"/>
 <path d="M0.6 0.8 H4.6 V5.6 H0.6 Z M2.6 5.6 V9 H4.2" fill="none" stroke="#fff" stroke-width="0.8"/>
</svg>
<svg style="left:691px;top:678px" width="15" height="13" viewBox="0 0 15 13">
 <path d="M0.8 4.4 H3.2 L6.4 1.4 V11.6 L3.2 8.6 H0.8 Z" fill="none" stroke="#fff" stroke-width="0.9" stroke-linejoin="round"/>
 <path d="M8.4 4.6 Q9.6 6.5 8.4 8.4 M10.4 3.2 Q12.4 6.5 10.4 9.8 M12.4 1.8 Q15 6.5 12.4 11.2" fill="none" stroke="#fff" stroke-width="0.8"/>
</svg>
<svg style="left:767.6px;top:678px" width="14" height="13.4" viewBox="0 0 15 15">
 <path d="M0.8 0.8 H14.2 V10.4 H9 L7.4 13.2 L5.8 10.4 H0.8 Z" fill="none" stroke="#fff" stroke-width="1"/>
</svg>
<div class="a" style="left:796px;top:669px;width:1px;height:31px;background:#4a4a4a"></div>
<div class="t" style="left:320.83px;top:105.53px;font-size:9.3px;color:#1a1a1a;transform:scaleX(0.9698);transform-origin:0.37px 50%;">Präsentation1</div>
<div class="t" style="left:381.43px;top:105.53px;font-size:9.3px;color:#1a1a1a;">-</div>
<div class="t" style="left:389.63px;top:105.53px;font-size:9.3px;color:#1a1a1a;letter-spacing:0.117px;">Microsoft PowerPoint</div>
<div class="t" style="left:10.82px;top:123.84px;font-size:9.4px;color:#ffffff;transform:scaleX(0.9753);transform-origin:0.38px 50%;-webkit-text-stroke:0.3px #fff;">Datei</div>
<div class="t" style="left:56.92px;top:123.64px;font-size:9.4px;color:#3a3a3a;transform:scaleX(0.9299);transform-origin:0.38px 50%;">Start</div>
<div class="t" style="left:96.82px;top:123.64px;font-size:9.4px;color:#3a3a3a;letter-spacing:0.093px;">Einfügen</div>
<div class="t" style="left:156.62px;top:123.64px;font-size:9.4px;color:#3a3a3a;letter-spacing:-0.005px;">Entwurf</div>
<div class="t" style="left:210.22px;top:123.64px;font-size:9.4px;color:#3a3a3a;letter-spacing:-0.116px;">Übergänge</div>
<div class="t" style="left:277.22px;top:123.64px;font-size:9.4px;color:#3a3a3a;letter-spacing:-0.056px;">Animationen</div>
<div class="t" style="left:351.02px;top:123.64px;font-size:9.4px;color:#3a3a3a;letter-spacing:-0.113px;">Bildschirmpräsentation</div>
<div class="t" style="left:465.62px;top:123.64px;font-size:9.4px;color:#3a3a3a;letter-spacing:-0.016px;">Überprüfen</div>
<div class="t" style="left:533.92px;top:123.64px;font-size:9.4px;color:#3a3a3a;transform:scaleX(0.9706);transform-origin:0.38px 50%;">Ansicht</div>
<div class="t" style="left:10.62px;top:170.24px;font-size:9.4px;color:#2a2a2a;letter-spacing:-0.036px;-webkit-text-stroke:0.18px #2a2a2a;">Einfügen</div>
<div class="t" style="left:1.82px;top:194.04px;font-size:9.4px;color:#6b7685;transform:scaleX(0.9675);transform-origin:0.38px 50%;">Zwischenablage</div>
<div class="t" style="left:94.12px;top:170.24px;font-size:9.4px;color:#2a2a2a;transform:scaleX(0.9608);transform-origin:0.38px 50%;-webkit-text-stroke:0.18px #2a2a2a;">Neue</div>
<div class="t" style="left:92.52px;top:180.64px;font-size:9.4px;color:#2a2a2a;transform:scaleX(0.9158);transform-origin:0.38px 50%;-webkit-text-stroke:0.18px #2a2a2a;">Folie</div>
<div class="t" style="left:138.82px;top:143.54px;font-size:9.4px;color:#2a2a2a;transform:scaleX(0.9350);transform-origin:0.38px 50%;-webkit-text-stroke:0.18px #2a2a2a;">Layout</div>
<div class="t" style="left:138.82px;top:160.84px;font-size:9.4px;color:#2a2a2a;transform:scaleX(0.9476);transform-origin:0.38px 50%;-webkit-text-stroke:0.18px #2a2a2a;">Zurücksetzen</div>
<div class="t" style="left:138.82px;top:178.04px;font-size:9.4px;color:#2a2a2a;letter-spacing:-0.025px;-webkit-text-stroke:0.18px #2a2a2a;">Abschnitt</div>
<div class="t" style="left:129.62px;top:194.04px;font-size:9.4px;color:#6b7685;transform:scaleX(0.9607);transform-origin:0.38px 50%;">Folien</div>
<div class="t" style="left:264.12px;top:194.04px;font-size:9.4px;color:#6b7685;letter-spacing:-0.106px;">Schriftart</div>
<div class="t" style="left:434.62px;top:194.04px;font-size:9.4px;color:#6b7685;transform:scaleX(0.9250);transform-origin:0.38px 50%;">Absatz</div>
<div class="t" style="left:534.62px;top:170.24px;font-size:9.4px;color:#2a2a2a;transform:scaleX(0.9292);transform-origin:0.38px 50%;-webkit-text-stroke:0.18px #2a2a2a;">Formen</div>
<div class="t" style="left:568.62px;top:170.24px;font-size:9.4px;color:#2a2a2a;letter-spacing:-0.015px;-webkit-text-stroke:0.18px #2a2a2a;">Anordnen</div>
<div class="t" style="left:613.62px;top:170.24px;font-size:9.4px;color:#a8a8a8;transform:scaleX(0.9518);transform-origin:0.38px 50%;">Schnellformat-</div>
<div class="t" style="left:621.62px;top:180.64px;font-size:9.4px;color:#a8a8a8;letter-spacing:-0.058px;">vorlagen</div>
<div class="t" style="left:587.62px;top:194.04px;font-size:9.4px;color:#6b7685;letter-spacing:-0.027px;">Zeichnung</div>
<div class="t" style="left:725.12px;top:143.54px;font-size:9.4px;color:#2a2a2a;transform:scaleX(0.9285);transform-origin:0.38px 50%;-webkit-text-stroke:0.18px #2a2a2a;">Suchen</div>
<div class="t" style="left:725.12px;top:160.84px;font-size:9.4px;color:#2a2a2a;transform:scaleX(0.9057);transform-origin:0.38px 50%;-webkit-text-stroke:0.18px #2a2a2a;">Ersetzen</div>
<div class="t" style="left:725.12px;top:178.04px;font-size:9.4px;color:#2a2a2a;transform:scaleX(0.9727);transform-origin:0.38px 50%;-webkit-text-stroke:0.18px #2a2a2a;">Markieren</div>
<div class="t" style="left:719.62px;top:194.04px;font-size:9.4px;color:#6b7685;transform:scaleX(0.9599);transform-origin:0.38px 50%;">Bearbeiten</div>
<div class="t" style="left:271.42px;top:369.94px;font-size:27px;color:#000000;letter-spacing:0.901px;">Titel</div>
<div class="t" style="left:334.72px;top:369.94px;font-size:27px;color:#000000;letter-spacing:1.018px;">durch</div>
<div class="t" style="left:416.92px;top:369.94px;font-size:27px;color:#000000;transform:scaleX(0.9833);transform-origin:1.08px 50%;">Klicken</div>
<div class="t" style="left:512.22px;top:369.94px;font-size:27px;color:#000000;letter-spacing:0.911px;">hinzufügen</div>
<div class="t" style="left:300.23px;top:446.25px;font-size:19.2px;color:#8c8c8c;letter-spacing:1.319px;">Untertitel</div>
<div class="t" style="left:395.13px;top:446.25px;font-size:19.2px;color:#8c8c8c;letter-spacing:0.788px;">durch</div>
<div class="t" style="left:453.73px;top:446.25px;font-size:19.2px;color:#8c8c8c;letter-spacing:0.299px;">Klicken</div>
<div class="t" style="left:524.53px;top:446.25px;font-size:19.2px;color:#8c8c8c;letter-spacing:0.751px;">hinzufügen</div>
<div class="t" style="left:135.51px;top:628.69px;font-size:12.3px;color:#111111;transform:scaleX(0.9636);transform-origin:0.49px 50%;">Klicken</div>
<div class="t" style="left:179.01px;top:628.69px;font-size:12.3px;color:#111111;transform:scaleX(0.8747);transform-origin:0.49px 50%;">Sie,</div>
<div class="t" style="left:203.81px;top:628.69px;font-size:12.3px;color:#111111;transform:scaleX(0.9355);transform-origin:0.49px 50%;">um</div>
<div class="t" style="left:224.51px;top:628.69px;font-size:12.3px;color:#111111;transform:scaleX(0.9716);transform-origin:0.49px 50%;">Notizen</div>
<div class="t" style="left:270.31px;top:628.69px;font-size:12.3px;color:#111111;letter-spacing:-0.076px;">hinzuzufügen</div>
<div class="t" style="left:5.95px;top:655.55px;font-size:8.8px;color:#333333;letter-spacing:0.004px;">Folie 1 von 1</div>
<div class="t" style="left:70.95px;top:655.55px;font-size:8.8px;color:#333333;letter-spacing:-0.110px;">&quot;Larissa&quot;</div>
<div class="t" style="left:648.95px;top:655.55px;font-size:8.8px;color:#333333;transform:scaleX(0.9317);transform-origin:0.35px 50%;">69 %</div>
<div class="t" style="left:68.34px;top:679.05px;font-size:11.4px;color:#b0b0b0;letter-spacing:0.055px;">Zur Suche Text hier eingeben</div>
<div class="t" style="left:722.02px;top:672.17px;font-size:9.6px;color:#ffffff;transform:scaleX(0.8917);transform-origin:0.38px 50%;-webkit-text-stroke:0.2px #fff;">14:05</div>
<div class="t" style="left:711.22px;top:685.97px;font-size:9.6px;color:#ffffff;transform:scaleX(0.8811);transform-origin:0.38px 50%;-webkit-text-stroke:0.2px #fff;">26.08.2019</div>
<div class="t" style="left:7.58px;top:233.21px;font-size:10.5px;color:#222222;font-weight:bold;font-family:&quot;Liberation Serif&quot;,serif">1</div>
<div class="t" style="left:320.46px;top:148.99px;font-size:13.5px;color:#808387;font-family:&quot;Liberation Serif&quot;,serif;">A</div>
<div class="t" style="left:338.95px;top:152.83px;font-size:8.8px;color:#808387;font-family:&quot;Liberation Serif&quot;,serif;">A</div>
<div class="t" style="left:207.98px;top:172.62px;font-size:10.6px;color:#5a5a5a;font-family:&quot;Liberation Serif&quot;,serif;font-weight:bold;">F</div>
<div class="t" style="left:225.08px;top:172.62px;font-size:10.6px;color:#5a5a5a;font-family:&quot;Liberation Serif&quot;,serif;font-style:italic;font-weight:bold;">K</div>
<div class="t" style="left:244.38px;top:172.29px;font-size:10.4px;color:#5a5a5a;font-family:&quot;Liberation Serif&quot;,serif;text-decoration:underline;">U</div>
<div class="t" style="left:264.17px;top:172.36px;font-size:10.8px;color:#6a6a6a;font-family:&quot;Liberation Serif&quot;,serif;font-weight:bold;text-shadow:1.2px 1.2px 1px #bbb;">S</div>
<div class="t" style="left:279.22px;top:173.16px;font-size:9.6px;color:#8a8d91;transform:scaleX(0.8998);transform-origin:0.38px 50%;font-family:&quot;Liberation Serif&quot;,serif;text-decoration:line-through;">abc</div>
<div class="t" style="left:299.68px;top:170.90px;font-size:8px;color:#77797d;letter-spacing:1.002px;font-family:&quot;Liberation Serif&quot;,serif;">AV</div>
<div class="t" style="left:323.15px;top:171.82px;font-size:11.2px;color:#77797d;transform:scaleX(0.8759);transform-origin:0.45px 50%;font-family:&quot;Liberation Serif&quot;,serif;-webkit-text-stroke:0.2px #77797d;">Aa</div>
<div class="t" style="left:355.68px;top:169.51px;font-size:13px;color:#808387;font-family:&quot;Liberation Serif&quot;,serif;">A</div>
</body></html>
